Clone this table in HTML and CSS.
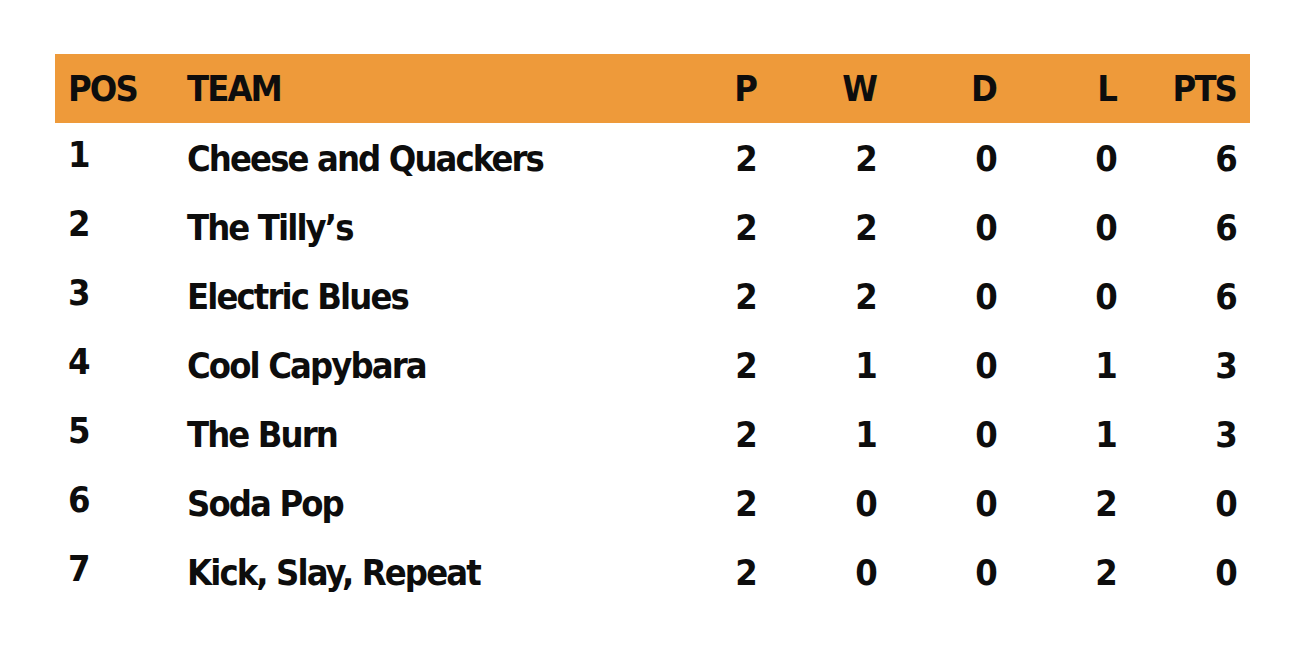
FILE: index.html
```html
<!DOCTYPE html>
<html lang="en">
<head>
<meta charset="utf-8">
<title>League Table</title>
<link rel="stylesheet" href="styles.css">
</head>
<body>
<div class="table">
  <div class="row head">
    <div class="pos">POS</div><div class="team">TEAM</div>
    <div class="num">P</div><div class="num">W</div><div class="num">D</div><div class="num">L</div><div class="num">PTS</div>
  </div>
  <div class="row">
    <div class="pos">1</div><div class="team">Cheese and Quackers</div>
    <div class="num">2</div><div class="num">2</div><div class="num">0</div><div class="num">0</div><div class="num">6</div>
  </div>
  <div class="row">
    <div class="pos">2</div><div class="team">The Tilly’s</div>
    <div class="num">2</div><div class="num">2</div><div class="num">0</div><div class="num">0</div><div class="num">6</div>
  </div>
  <div class="row">
    <div class="pos">3</div><div class="team">Electric Blues</div>
    <div class="num">2</div><div class="num">2</div><div class="num">0</div><div class="num">0</div><div class="num">6</div>
  </div>
  <div class="row">
    <div class="pos">4</div><div class="team">Cool Capybara</div>
    <div class="num">2</div><div class="num">1</div><div class="num">0</div><div class="num">1</div><div class="num">3</div>
  </div>
  <div class="row">
    <div class="pos">5</div><div class="team">The Burn</div>
    <div class="num">2</div><div class="num">1</div><div class="num">0</div><div class="num">1</div><div class="num">3</div>
  </div>
  <div class="row">
    <div class="pos">6</div><div class="team">Soda Pop</div>
    <div class="num">2</div><div class="num">0</div><div class="num">0</div><div class="num">2</div><div class="num">0</div>
  </div>
  <div class="row">
    <div class="pos">7</div><div class="team">Kick, Slay, Repeat</div>
    <div class="num">2</div><div class="num">0</div><div class="num">0</div><div class="num">2</div><div class="num">0</div>
  </div>
</div>
</body>
</html>
```
FILE: styles.css
```css
html, body {
  margin: 0;
  padding: 0;
  background: #ffffff;
}
body {
  padding: 54px 56px 0 55px;
  font-family: "DejaVu Sans Condensed", "Liberation Sans", sans-serif;
  font-weight: bold;
  color: #0d0d0d;
}
.table {
  width: 1195px;
}
.row {
  display: grid;
  grid-template-columns: 119px 449px repeat(5, 120px);
  padding: 0 14px 0 13px;
  height: 69px;
  align-items: center;
  font-size: 36px;
  letter-spacing: -1.9px;
  line-height: 1;
}
.row.head {
  background: #ee9a3a;
}
.pos {
  padding-bottom: 6px;
}
.head .pos {
  padding-bottom: 0;
}
.team {
  padding-top: 2px;
}
.num {
  text-align: right;
  padding-top: 2px;
}
.head .team,
.head .num {
  padding-top: 0;
}
```
